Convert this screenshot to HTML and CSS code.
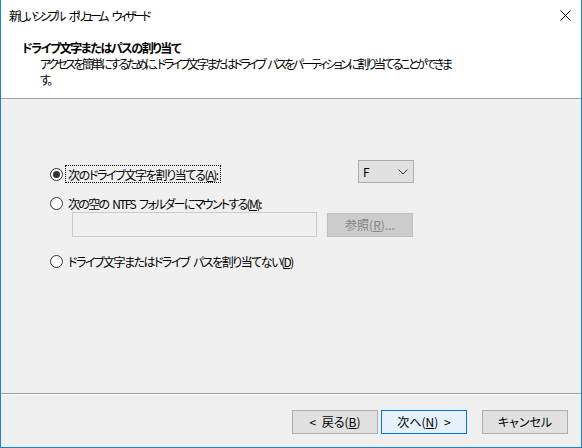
FILE: index.html
```html
<!DOCTYPE html>
<html lang="ja">
<head>
    <meta charset="UTF-8">
    <title>新しいシンプル ボリューム ウィザード</title>
    <link rel="stylesheet" href="styles.css">
</head>
<body>
    <div class="window">
        <div class="titlebar">
            <span class="title">新しいシンプル ボリューム ウィザード</span>
            <svg class="close" width="11" height="11" viewBox="0 0 11 11">
                <path d="M0.5 0.5 L10.5 10.5 M10.5 0.5 L0.5 10.5" stroke="#000" stroke-width="1" fill="none"/>
            </svg>
        </div>

        <!-- Page header -->
        <div class="header">
            <h1>ドライブ文字またはパスの割り当て</h1>
            <p>アクセスを簡単にするために、ドライブ文字またはドライブ パスをパーティションに割り当てることができま<br>す。</p>
        </div>

        <div class="content">
            <div class="row first">
                <div class="option">
                    <span class="radio checked"></span>
                    <span class="label focused opt-a">次のドライブ文字を割り当てる(<u>A</u>):</span>
                </div>
                <div class="combo">
                    <span>F</span>
                    <svg width="10" height="6" viewBox="0 0 10 6">
                        <path d="M0.5 0.5 L5 5 L9.5 0.5" stroke="#333" stroke-width="1" fill="none"/>
                    </svg>
                </div>
            </div>

            <div class="option">
                <span class="radio"></span>
                <span class="label opt-m">次の空の NTFS フォルダーにマウントする(<u>M</u>):</span>
            </div>
            <div class="path-row">
                <div class="textfield"></div>
                <div class="btn disabled">参照(<u>R</u>)...</div>
            </div>

            <div class="option last">
                <span class="radio"></span>
                <span class="label opt-d">ドライブ文字またはドライブ パスを割り当てない(<u>D</u>)</span>
            </div>
        </div>

        <div class="footer">
            <div class="btn">&lt; 戻る(<u>B</u>)</div>
            <div class="btn default">次へ(<u>N</u>) &gt;</div>
            <div class="btn cancel">キャンセル</div>
        </div>
    </div>
</body>
</html>
```

FILE: styles.css
```css
* {
    margin: 0;
    padding: 0;
    box-sizing: border-box;
}
body {
    font-family: 'Noto Sans CJK JP', 'Noto Sans', sans-serif;
    font-size: 12px;
    line-height: 16px;
    font-feature-settings: "palt";
    word-spacing: 3px;
    color: #000;
    background: #fff;
}
.window {
    width: 582px;
    height: 448px;
    border: 1px solid #1883d7;
    border-top: none;
    display: flex;
    flex-direction: column;
    background: #fff;
}
.titlebar {
    height: 31px;
    display: flex;
    align-items: center;
    justify-content: space-between;
    padding: 0 10px 0 8px;
}
.title {
    letter-spacing: -3.3px;
    word-spacing: 6px;
}
.close {
    margin-top: -1px;
}
.header {
    height: 68px;
    padding: 9px 0 0 21px;
    border-bottom: 1px solid #a0a0a0;
}
h1 {
    font-size: 12px;
    font-weight: bold;
    line-height: 16px;
    letter-spacing: -1.4px;
}
.header p {
    padding-left: 18px;
    letter-spacing: -2.55px;
}
.content {
    flex: 1;
    background: #f0f0f0;
    padding: 61px 0 0 49px;
}
.row {
    display: flex;
    align-items: flex-end;
    justify-content: space-between;
    width: 364px;
}
.option {
    display: flex;
    align-items: center;
    height: 18px;
    margin-top: 11px;
}
.row .option {
    margin-top: 0;
}
.option.last {
    margin-top: 15px;
}
.radio {
    width: 13px;
    height: 13px;
    border: 1px solid #333;
    border-radius: 50%;
    background: #fff;
    margin-right: 2px;
    display: flex;
    align-items: center;
    justify-content: center;
}
.radio.checked::after {
    content: "";
    width: 7px;
    height: 7px;
    border-radius: 50%;
    background: #333;
}
.label {
    padding: 0 2px;
    height: 18px;
    line-height: 17px;
    border: 1px solid transparent;
}
.label.focused {
    border: 1px dotted #000;
}
.opt-a {
    letter-spacing: -1.35px;
}
.opt-m {
    letter-spacing: -1.7px;
}
.opt-d {
    letter-spacing: -1.5px;
}
.combo {
    width: 56px;
    height: 23px;
    background: #e1e1e1;
    border: 1px solid #adadad;
    display: flex;
    align-items: center;
    justify-content: space-between;
    padding: 0 5px 0 4px;
}
.path-row {
    display: flex;
    align-items: center;
    margin: 0 0 0 22px;
}
.textfield {
    width: 245px;
    height: 25px;
    background: #f0f0f0;
    border: 1px solid #cccccc;
    margin-right: 10px;
}
.btn {
    width: 86px;
    height: 24px;
    border: 1px solid #adadad;
    background: #e1e1e1;
    display: flex;
    align-items: center;
    justify-content: center;
}
.btn.disabled {
    background: #cccccc;
    border-color: #bfbfbf;
    color: #838383;
}
.btn.default {
    background: #e5f1fb;
    border-color: #0078d7;
}
.footer {
    height: 54px;
    background: #f0f0f0;
    border-top: 1px solid #a0a0a0;
    box-shadow: inset 0 1px 0 #fff;
    display: flex;
    justify-content: flex-end;
    gap: 3px;
    padding: 16px 13px 0 0;
}
.btn.cancel {
    margin-left: 12px;
}
```
